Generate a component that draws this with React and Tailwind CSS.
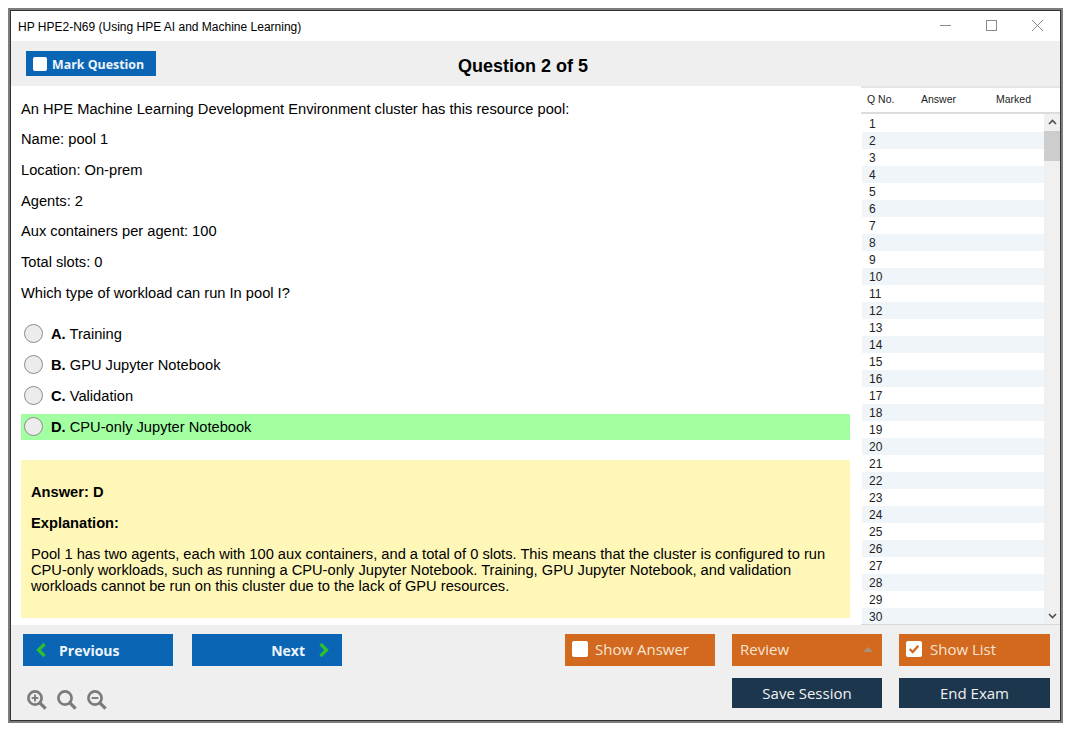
import { useState } from 'react'

const LINES = [
  'An HPE Machine Learning Development Environment cluster has this resource pool:',
  'Name: pool 1',
  'Location: On-prem',
  'Agents: 2',
  'Aux containers per agent: 100',
  'Total slots: 0',
  'Which type of workload can run In pool I?',
]

const OPTIONS = [
  { key: 'A', text: 'Training' },
  { key: 'B', text: 'GPU Jupyter Notebook' },
  { key: 'C', text: 'Validation' },
  { key: 'D', text: 'CPU-only Jupyter Notebook', correct: true },
]

const ROWS = Array.from({ length: 30 }, (_, i) => i + 1)

function Chevron({ dir }) {
  const d = dir === 'left' ? 'M9.5 2 L3.5 8 L9.5 14' : 'M3.5 2 L9.5 8 L3.5 14'
  return (
    <svg width="13" height="16" viewBox="0 0 13 16" fill="none">
      <path d={d} stroke="#2fc02f" strokeWidth="3.2" />
    </svg>
  )
}

function Zoom({ mark }) {
  return (
    <svg width="20" height="20" viewBox="0 0 20 20" fill="none" stroke="#7b7b7b">
      <circle cx="8" cy="8" r="6.6" strokeWidth="2.7" />
      <path d="M12.6 12.6 L18.6 18.6" strokeWidth="3.2" />
      {mark && <path d="M4.6 8 H11.4" strokeWidth="1.9" />}
      {mark === 'plus' && <path d="M8 4.6 V11.4" strokeWidth="1.9" />}
    </svg>
  )
}

function CheckBox({ checked, small }) {
  return (
    <span className={`flex items-center justify-center rounded-[2px] bg-white ${small ? 'h-[14px] w-[14px]' : 'h-[16px] w-[16px]'}`}>
      {checked && (
        <svg width="12" height="12" viewBox="0 0 11 11" fill="none">
          <path d="M1.5 5.5 L4.3 8.3 L9.5 2.5" stroke="#d2691e" strokeWidth="2.2" />
        </svg>
      )}
    </span>
  )
}

export default function App() {
  const [selected, setSelected] = useState('')

  return (
    <div className="h-[735px] w-[1075px] bg-white pt-2 pl-2 font-['Liberation_Sans',sans-serif] text-black">
      <div className="h-[715px] w-[1055px] border-2 border-[#7d7d7d]">
        <div className="flex h-full flex-col border border-[#333333] bg-white">
          {/* Title bar */}
          <div className="flex h-[30px] shrink-0 items-center justify-between pl-[7px] pr-[17px]">
            <span className="pt-[2px] text-[12px]">HP HPE2-N69 (Using HPE AI and Machine Learning)</span>
            <div className="mb-[2px] flex items-center gap-[35px]">
              <svg width="11" height="11" viewBox="0 0 11 11" stroke="#8a8a8a" fill="none"><path d="M0 5.5 H11" /></svg>
              <svg width="11" height="11" viewBox="0 0 11 11" stroke="#8a8a8a" fill="none"><rect x="0.5" y="0.5" width="10" height="10" /></svg>
              <svg width="11" height="11" viewBox="0 0 11 11" stroke="#8a8a8a" fill="none"><path d="M0 0 L11 11 M11 0 L0 11" /></svg>
            </div>
          </div>

          {/* Toolbar */}
          <div className="relative flex h-[45px] shrink-0 items-center justify-center bg-[#efefef] pr-[25px] pt-[5px]">
            <button type="button" className="absolute left-[15px] top-[10px] flex h-[25px] w-[130px] items-center gap-[5px] bg-[#0a66b4] pl-[7px] pt-[1px] font-['Open_Sans',sans-serif] text-[12.4px] font-bold text-[#eef4fa]">
              <CheckBox small />
              <span className="pt-[2px]">Mark Question</span>
            </button>
            <h1 className="text-[18px] font-bold">Question 2 of 5</h1>
          </div>

          {/* Main */}
          <div className="flex min-h-0 flex-1">
            <div className="w-[850px] shrink-0 pl-[10px] pr-[11px]">
              <div className="flex flex-col gap-[14px] pt-[14.6px] text-[14.67px] leading-[16.7px]">
                {LINES.map(l => <p key={l}>{l}</p>)}
              </div>

              <div className="mt-[19px] flex flex-col gap-[5px]">
                {OPTIONS.map(o => (
                  <label key={o.key} className={`flex h-[26px] items-center text-[14.67px] ${o.correct ? 'bg-[#a2ffa2]' : ''}`}>
                    <input type="radio" name="opt" checked={selected === o.key} onChange={() => setSelected(o.key)} className="peer sr-only" />
                    <span className="ml-[3px] h-[19px] w-[19px] rounded-full border border-[#8c8c8c] bg-[#ececec]" />
                    <span className="ml-[8px]"><b>{o.key}.</b> {o.text}</span>
                  </label>
                ))}
              </div>

              <div className="mt-[20px] h-[158px] bg-[#fff7b8] px-[10px] pt-[24px] text-[14.67px]">
                <p className="font-bold leading-[16px]">Answer: D</p>
                <p className="mt-[15px] font-bold leading-[16px]">Explanation:</p>
                <p className="mt-[15px] leading-[16px]">
                  Pool 1 has two agents, each with 100 aux containers, and a total of 0 slots. This means that the cluster is configured to run CPU-only workloads, such as running a CPU-only Jupyter Notebook. Training, GPU Jupyter Notebook, and validation workloads cannot be run on this cluster due to the lack of GPU resources.
                </p>
              </div>
            </div>

            {/* Question list */}
            <div className="flex min-w-0 flex-1 flex-col">
              <div className="flex h-[28px] shrink-0 items-center border-y-2 border-t-[#e4e4e4] border-b-[#dcdcdc] pl-[6px] text-[10.5px] text-[#222222]">
                <span className="w-[54px]">Q No.</span>
                <span className="w-[75px]">Answer</span>
                <span>Marked</span>
              </div>
              <div className="flex min-h-0 flex-1 overflow-hidden border-b border-[#d8d8d8]">
                <div className="min-w-0 flex-1 pt-px pl-px">
                  {ROWS.map(n => (
                    <div key={n} className={`flex h-[17.03px] items-center pl-[7px] text-[12px] leading-none text-[#222222] ${n % 2 === 0 ? 'bg-[#f0f5fa]' : 'bg-white'}`}>
                      {n}
                    </div>
                  ))}
                </div>
                <div className="flex w-[16px] shrink-0 flex-col items-center bg-[#f0f0f0]">
                  <svg className="mt-[5px] shrink-0" width="9" height="6" viewBox="0 0 9 6" fill="none"><path d="M1 5 L4.5 1.5 L8 5" stroke="#505050" strokeWidth="1.6" /></svg>
                  <div className="mt-[6px] h-[30px] w-full bg-[#cdcdcd]" />
                  <svg className="mt-auto mb-[5px] shrink-0" width="9" height="6" viewBox="0 0 9 6" fill="none"><path d="M1 1 L4.5 4.5 L8 1" stroke="#505050" strokeWidth="1.6" /></svg>
                </div>
              </div>
            </div>
          </div>

          {/* Footer */}
          <div className="flex h-[95px] shrink-0 justify-between bg-[#efefef] pt-[9px] pr-[10px] pl-[12px] font-['Open_Sans',sans-serif]">
            <div>
              <div className="flex gap-[19px]">
                <button type="button" className="flex h-[32px] w-[150px] items-center gap-[11px] bg-[#0a66b4] pl-[12px] text-[14px] font-bold text-[#eef4fa]">
                  <Chevron dir="left" />
                  Previous
                </button>
                <button type="button" className="flex h-[32px] w-[150px] items-center justify-end gap-[12px] bg-[#0a66b4] pr-[12px] text-[14px] font-bold text-[#eef4fa]">
                  Next
                  <Chevron dir="right" />
                </button>
              </div>
              <div className="mt-[24px] ml-[4px] flex gap-[10px]">
                <Zoom mark="plus" />
                <Zoom />
                <Zoom mark="minus" />
              </div>
            </div>

            <div className="grid grid-cols-[150px_150px_151px] grid-rows-[32px_30px] gap-x-[17px] gap-y-[12px] text-[15px] text-[#f7e4d4]">
              <button type="button" className="flex items-center gap-[7px] bg-[#d2691e] pb-[2px] pl-[7px]">
                <CheckBox />
                Show Answer
              </button>
              <button type="button" className="flex items-center justify-between bg-[#d2691e] pb-[2px] pr-[9px] pl-[8px]">
                Review
                <span className="h-0 w-0 border-x-[5px] border-b-[5px] border-x-transparent border-b-[#a9907c]" />
              </button>
              <button type="button" className="flex items-center gap-[8px] bg-[#d2691e] pb-[2px] pl-[7px]">
                <CheckBox checked />
                Show List
              </button>
              <button type="button" className="col-start-2 bg-[#1c364d] text-[#f2f2f2]">Save Session</button>
              <button type="button" className="bg-[#1c364d] text-[#f2f2f2]">End Exam</button>
            </div>
          </div>
        </div>
      </div>
    </div>
  )
}
